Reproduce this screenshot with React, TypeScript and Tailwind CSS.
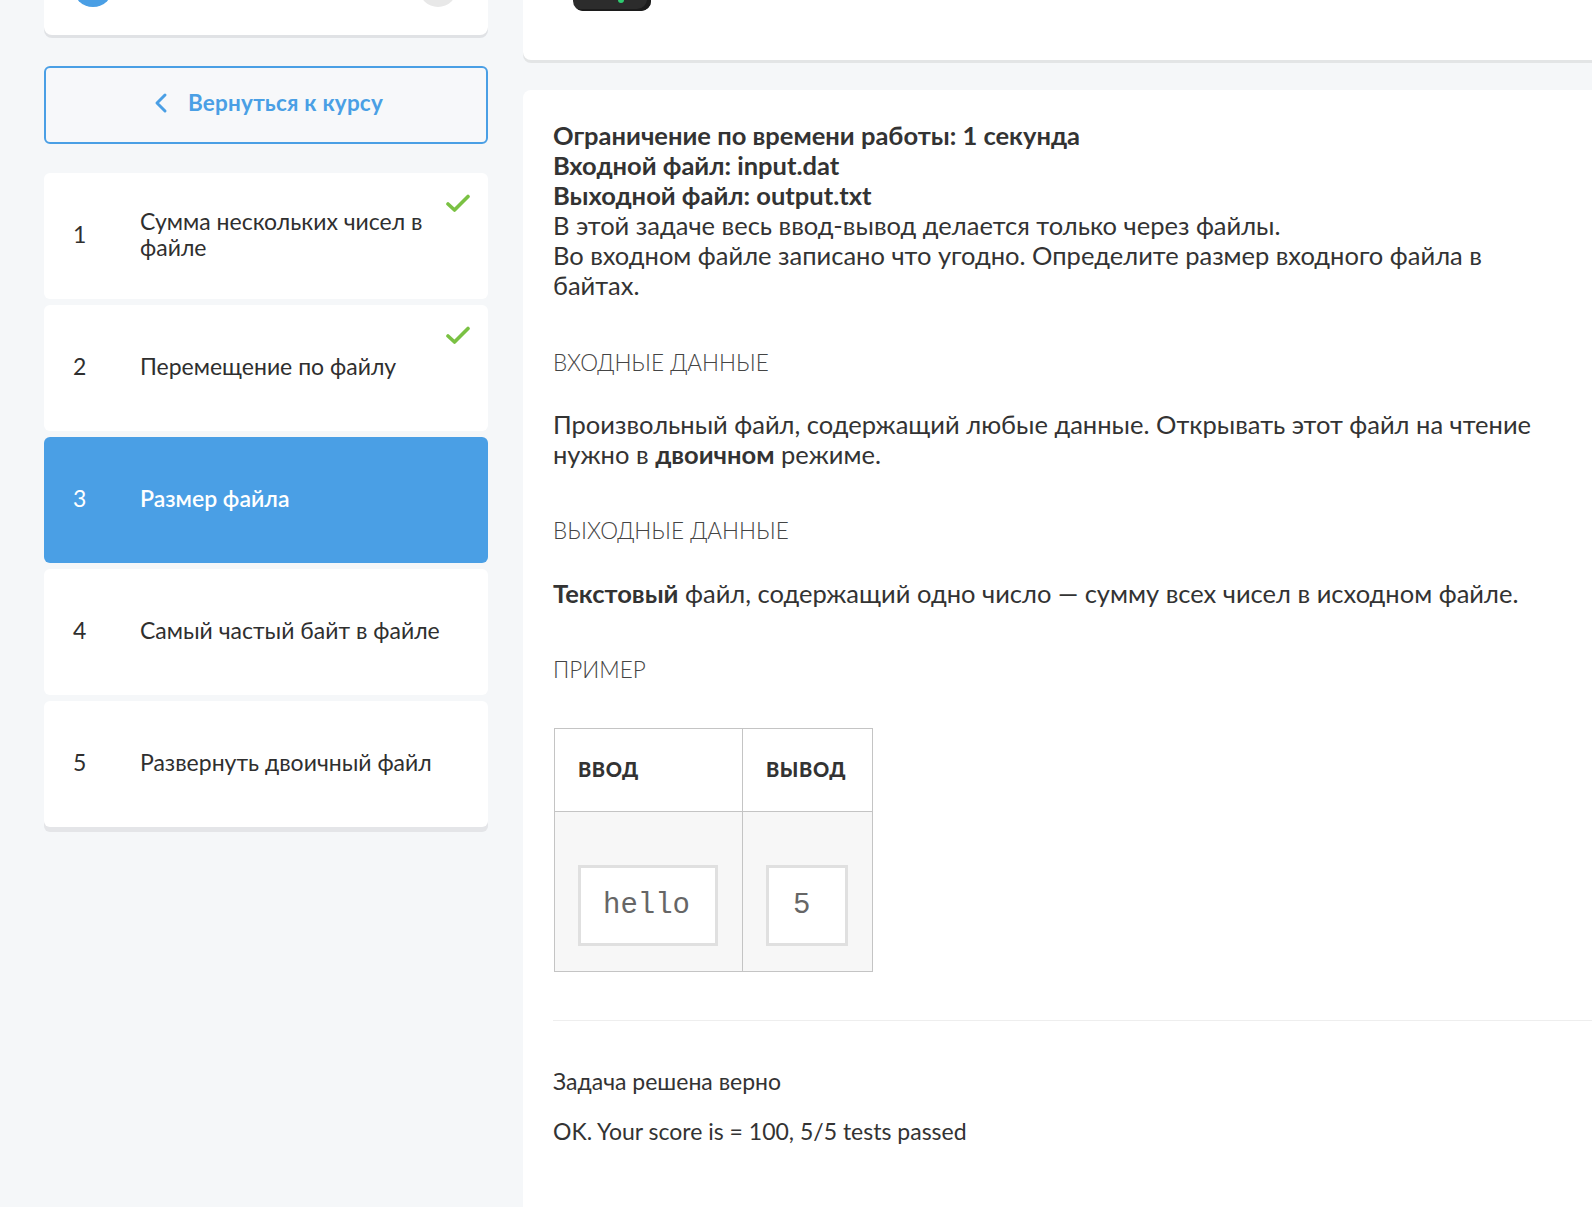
import React from "react";

const font = { fontFamily: '"Lato", "Noto Sans", sans-serif' };

function Check() {
  return (
    <svg width="24" height="19" viewBox="0 0 24 19" className="absolute right-[18px] top-[21px]">
      <polyline points="2,10 8.5,16 22,2.5" fill="none" stroke="#7ac143" strokeWidth="3.6" strokeLinecap="round" strokeLinejoin="round" />
    </svg>
  );
}

type Item = { n: number; title: string; done?: boolean; active?: boolean };

const items: Item[] = [
  { n: 1, title: "Сумма нескольких чисел в файле", done: true },
  { n: 2, title: "Перемещение по файлу", done: true },
  { n: 3, title: "Размер файла", active: true },
  { n: 4, title: "Самый частый байт в файле" },
  { n: 5, title: "Развернуть двоичный файл" },
];

export default function App() {
  return (
    <div className="w-full h-[1207px] overflow-hidden bg-[#f5f7f9] flex text-[#333]" style={font}>
      {/* Sidebar */}
      <div className="w-[523px] shrink-0 pl-[44px] pr-[35px]">
        <div className="-mt-[65px] h-[100px] bg-white rounded-b-[8px] shadow-[0_3px_0_#e0e2e5] flex items-end justify-between pl-[29px] pr-[31px] pb-[28px]">
          <div className="w-[40px] h-[40px] rounded-full bg-[#4a9fe5]" />
          <div className="w-[38px] h-[38px] rounded-full bg-[#e8e8e8]" />
        </div>
        <button className="mt-[31px] w-full h-[78px] rounded-[6px] border-2 border-[#4a9fe5] bg-[#f7f8fa] flex items-center justify-center gap-[20px] pl-[5px] pb-[5px] text-[#4a9fe5]">
          <svg width="14" height="22" viewBox="0 0 14 22">
            <polyline points="11,3 3,11 11,19" fill="none" stroke="#4a9fe5" strokeWidth="3" strokeLinecap="round" strokeLinejoin="round" />
          </svg>
          <span className="text-[22.5px] font-bold tracking-[0.2px]">Вернуться к курсу</span>
        </button>
        <div className="mt-[29px] flex flex-col gap-[6px]">
          {items.map((it, i) => (
            <div
              key={it.n}
              className={
                "relative h-[126px] rounded-[6px] flex items-center pl-[29px] pb-[4px] " +
                (it.active ? "bg-[#4a9fe5] text-white" : "bg-white text-[#2f2f2f]") +
                (i === items.length - 1 ? " shadow-[0_5px_0_#e4e5e8]" : "")
              }
            >
              <div className="w-[67px] text-[23px]">{it.n}</div>
              <div className={"w-[320px] text-[23px] leading-[26px] " + (it.active ? "font-semibold" : "")}>{it.title}</div>
              {it.done && <Check />}
            </div>
          ))}
        </div>
      </div>

      {/* Main */}
      <div className="flex-1 min-w-0">
        <div className="-mt-[60px] h-[120px] bg-white rounded-bl-[8px] shadow-[0_3px_0_#e3e5e6] flex items-end pl-[50px] pb-[49px]">
          <div className="relative w-[78px] h-[44px] rounded-[10px] bg-[#2c2c2c] shadow-[inset_-4px_-2px_0_#1c1c1c]">
            <div className="absolute left-[45px] bottom-[8px] w-[6px] h-[6px] rounded-full bg-[#2ecc71]" />
          </div>
          <div className="ml-[30px] mb-[14px] text-[34px] font-bold leading-[40px] text-[#2f2f2f]">Размер файла</div>
        </div>

        <div className="mt-[30px] bg-white rounded-tl-[8px] pl-[30px] pt-[30px] h-[1200px]">
          <div className="w-[1000px] text-[25.5px] leading-[30px] text-[#333]">
            <div className="font-bold">Ограничение по времени работы: 1 секунда</div>
            <div className="font-bold">Входной файл: input.dat</div>
            <div className="font-bold">Выходной файл: output.txt</div>
            <div>В этой задаче весь ввод-вывод делается только через файлы.</div>
            <div>Во входном файле записано что угодно. Определите размер входного файла в байтах.</div>

            <div className="mt-[48px] text-[22.5px] font-light uppercase text-[#444]">Входные данные</div>
            <p className="mt-[31px]">
              Произвольный файл, содержащий любые данные. Открывать этот файл на чтение нужно в <b>двоичном</b> режиме.
            </p>

            <div className="mt-[47px] text-[22.5px] font-light uppercase text-[#444]">Выходные данные</div>
            <p className="mt-[32px]">
              <b>Текстовый</b> файл, содержащий одно число — сумму всех чисел в исходном файле.
            </p>

            <div className="mt-[47px] text-[22.5px] font-light uppercase text-[#444]">Пример</div>

            <table className="mt-[43px] border-collapse border border-[#c4c4c4] ml-px">
              <thead>
                <tr className="h-[83px]">
                  <th className="w-[188px] border border-[#c4c4c4] text-left pl-[23px] pb-[3px] text-[20px] tracking-[0.6px] font-black uppercase text-[#333]">Ввод</th>
                  <th className="w-[130px] border border-[#c4c4c4] text-left pl-[23px] pb-[3px] text-[20px] tracking-[0.6px] font-black uppercase text-[#333]">Вывод</th>
                </tr>
              </thead>
              <tbody>
                <tr className="bg-[#f7f7f7]">
                  <td className="border border-[#c4c4c4] pl-[23px] pt-[53px] pb-[25px] align-top">
                    <div className="w-[140px] h-[81px] border-[3px] border-[#e0e0e0] bg-white flex items-center pl-[22px] text-[29px] text-[#666]" style={{ fontFamily: '"Liberation Mono", monospace' }}>
                      hello
                    </div>
                  </td>
                  <td className="border border-[#c4c4c4] pl-[23px] pt-[53px] pb-[25px] align-top">
                    <div className="w-[82px] h-[81px] border-[3px] border-[#e0e0e0] bg-white flex items-center pl-[24px] text-[29px] text-[#666]" style={{ fontFamily: '"Liberation Mono", monospace' }}>
                      5
                    </div>
                  </td>
                </tr>
              </tbody>
            </table>
          </div>

          <div className="mt-[48px] h-px bg-[#eeeeee]" />
          <div className="mt-[45px] text-[23px] leading-[30px] text-[#333]">Задача решена верно</div>
          <div className="mt-[20px] text-[23px] leading-[30px] text-[#333]">OK. Your score is = 100, 5/5 tests passed</div>
        </div>
      </div>
    </div>
  );
}
